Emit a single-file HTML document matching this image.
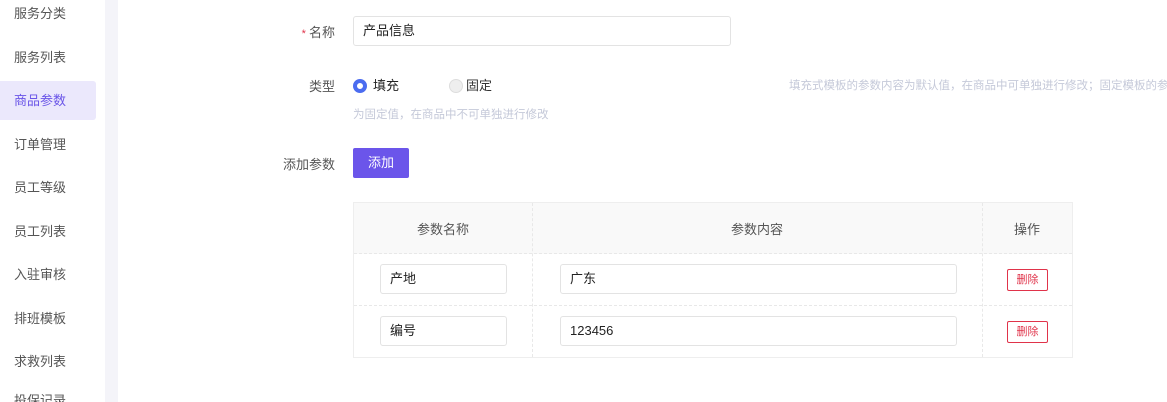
<!DOCTYPE html>
<html style="width:1167px;height:402px;overflow:hidden"><head><meta charset="utf-8"><style>
*{box-sizing:border-box;margin:0;padding:0}
body{width:1167px;height:402px;overflow:hidden;background:#fff;font-family:"Liberation Sans","Noto Sans CJK SC",sans-serif;font-size:13px;color:#333;position:relative}
.side{position:absolute;left:0;top:0;width:105px;height:402px;background:#fff;overflow:hidden}
.strip{position:absolute;left:105px;top:0;width:13px;height:402px;background:#f4f4f9}
.it{position:absolute;left:0;width:96px;height:39px;line-height:39px;padding-left:14px;color:#555;font-size:13px}
.it.act{background:#ebe8fc;color:#6a55e8;border-radius:0 3px 3px 0}
.lbl{position:absolute;right:832px;color:#555;font-size:13px;line-height:16px}
.inp{position:absolute;border:1px solid #e3e3e3;border-radius:3px;background:#fff;padding-left:9px;color:#222;font-size:13px}
.tbl{position:absolute;left:353px;top:202px;width:720px;height:156px;border:1px solid #eee}
.hd{position:absolute;left:0;top:0;width:718px;height:51px;background:#f9f9f9;border-bottom:1px dashed #e8e8e8}
.vl{position:absolute;top:0;height:154px;border-left:1px dashed #e8e8e8}
.hl{position:absolute;left:0;width:718px;border-top:1px dashed #e8e8e8}
.th{position:absolute;top:16px;color:#555;font-size:13px;text-align:center}
.del{position:absolute;left:653px;width:41px;height:22px;border:1px solid #e0334a;color:#e0334a;font-size:11px;text-align:center;line-height:20px;border-radius:2px}
</style></head><body>
<div class="side">
<div class="it" style="top:0;height:27px;line-height:27px">服务分类</div>
<div class="it" style="top:38px">服务列表</div>
<div class="it act" style="top:81px">商品参数</div>
<div class="it" style="top:125px">订单管理</div>
<div class="it" style="top:168px">员工等级</div>
<div class="it" style="top:212px">员工列表</div>
<div class="it" style="top:255px">入驻审核</div>
<div class="it" style="top:299px">排班模板</div>
<div class="it" style="top:342px">求救列表</div>
<div class="it" style="top:393px;height:9px;line-height:15px;overflow:hidden">投保记录</div>
</div>
<div class="strip"></div>

<div class="lbl" style="top:25px"><span style="color:#e0334a;font-size:11px">* </span>名称</div>
<div class="inp" style="left:353px;top:16px;width:378px;height:30px;line-height:28px">产品信息</div>

<div class="lbl" style="top:79px">类型</div>
<div style="position:absolute;left:353px;top:79px;width:14px;height:14px;border-radius:50%;border:4px solid #4b6cf0;background:#fff"></div>
<div style="position:absolute;left:373px;top:78px;color:#222;line-height:16px">填充</div>
<div style="position:absolute;left:449px;top:79px;width:14px;height:14px;border-radius:50%;border:1px solid #ddd;background:#eee"></div>
<div style="position:absolute;left:466px;top:78px;color:#333;line-height:16px">固定</div>
<div style="position:absolute;left:789px;top:79px;width:378px;overflow:hidden;color:#c5c9d9;font-size:11.5px;white-space:nowrap;line-height:14px">填充式模板的参数内容为默认值，在商品中可单独进行修改；固定模板的参</div>
<div style="position:absolute;left:353px;top:108px;color:#c5c9d9;font-size:11.5px;line-height:14px">为固定值，在商品中不可单独进行修改</div>

<div class="lbl" style="top:157px">添加参数</div>
<div style="position:absolute;left:353px;top:148px;width:56px;height:30px;background:#6b55ea;color:#fff;border-radius:2px;text-align:center;line-height:30px;font-size:13px">添加</div>

<div class="tbl">
<div class="hd"></div>
<div class="vl" style="left:178px"></div>
<div class="vl" style="left:628px"></div>
<div class="hl" style="top:102px"></div>
<div class="th" style="left:0;width:178px">参数名称</div>
<div class="th" style="left:178px;width:450px">参数内容</div>
<div class="th" style="left:628px;width:90px">操作</div>
<div class="inp" style="left:26px;top:61px;width:127px;height:30px;line-height:28px">产地</div>
<div class="inp" style="left:206px;top:61px;width:397px;height:30px;line-height:28px">广东</div>
<div class="del" style="top:66px">删除</div>
<div class="inp" style="left:26px;top:113px;width:127px;height:30px;line-height:28px">编号</div>
<div class="inp" style="left:206px;top:113px;width:397px;height:30px;line-height:28px">123456</div>
<div class="del" style="top:118px">删除</div>
</div>
</body></html>
